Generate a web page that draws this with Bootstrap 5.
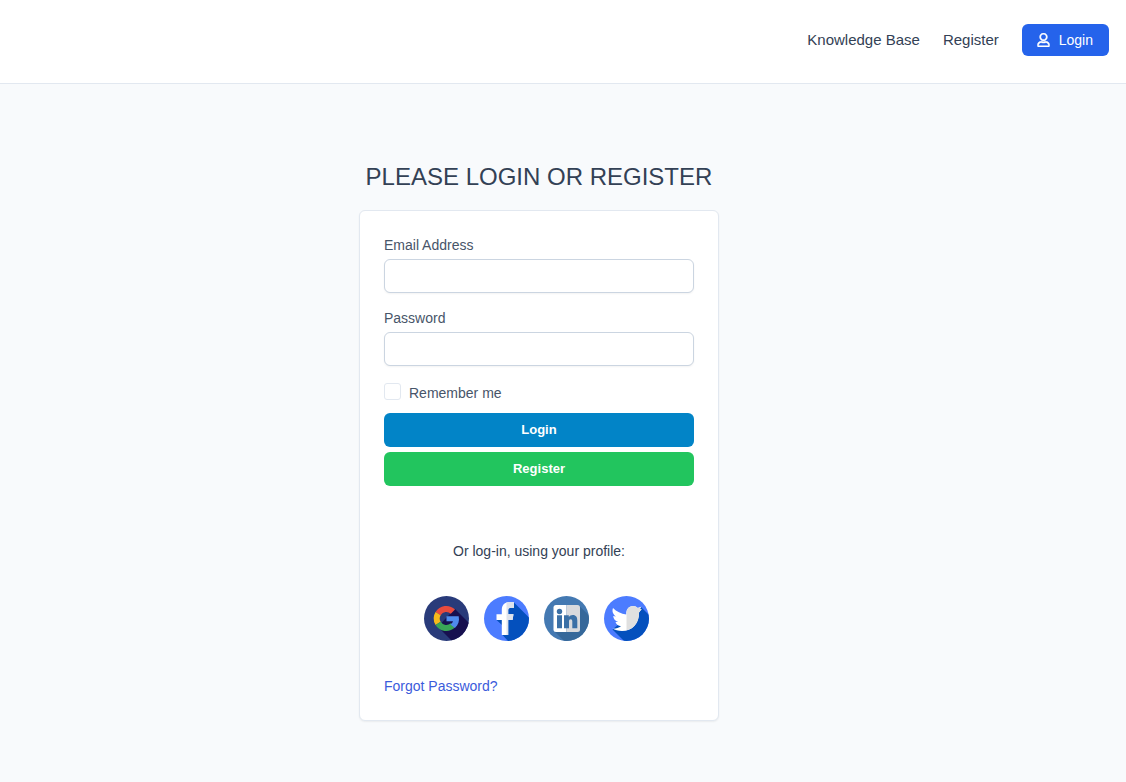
<!DOCTYPE html>
<html lang="en">
<head>
<meta charset="utf-8">
<meta name="viewport" content="width=device-width, initial-scale=1">
<title>Login</title>
<link href="https://cdn.jsdelivr.net/npm/bootstrap@5.3.0/dist/css/bootstrap.min.css" rel="stylesheet">
<style>
body { background: #f8fafc; color: #334155; font-family: "Liberation Sans", Arial, sans-serif; font-size: 14px; line-height: 20px; }
.site-header { background: #fff; border-bottom: 1px solid #e2e8f0; padding: 24px 17px 27px; }
.site-nav { gap: 23px; }
.site-nav a:not(.btn) { color: #334155; font-size: 15px; }
.btn { border: 0; border-radius: 6px; color: #fff; line-height: 20px; }
.btn-nav { background: #2563eb; font-size: 14px; padding: 6px 16px 6px 15px; gap: 9px; }
.btn-nav:hover { background: #1d4ed8; color: #fff; }
.btn-form { font-size: 13px; font-weight: 700; padding: 7px 16px; }
.btn-login, .btn-login:hover { background: #0284c7; color: #fff; }
.btn-register, .btn-register:hover { background: #22c55e; color: #fff; }
.login-main { padding: 75px 48px 60px 0; }
.login-panel { width: 100%; max-width: 360px; }
.login-title { font-size: 24px; line-height: 36px; font-weight: 400; margin-bottom: 15px; white-space: nowrap; }
.login-card { border: 1px solid #e2e8f0; border-radius: 6px; padding: 24px; box-shadow: 0 1px 2px rgba(0,0,0,.06); }
.login-field { margin-bottom: 15px; }
.form-label { color: #475569; margin-bottom: 4px; }
.form-control { height: 34px; border: 1px solid #cbd5e1; border-radius: 6px; font-size: 14px; padding: 6px 12px; box-shadow: 0 1px 2px rgba(0,0,0,.05); }
.remember-row { padding: 2px 0 10px; }
.form-check-input[type=checkbox] { width: 17px; height: 17px; border: 1px solid #e2e8f0; border-radius: 3px; margin: 0; }
.form-check-label { color: #475569; }
.form-actions { gap: 5px; }
.social-intro { margin: 55px 0 0; }
.social-row { gap: 15px; margin: 35px 0; padding-right: 5px; }
.forgot-link { color: #3b5bdb; }
</style>
</head>
<body>
<header class="site-header">
  <nav class="site-nav d-flex justify-content-end align-items-center" aria-label="Main">
    <a class="text-decoration-none" href="#kb">Knowledge Base</a>
    <a class="text-decoration-none" href="#register">Register</a>
    <a class="btn btn-nav d-flex align-items-center" href="#login">
      <svg width="13" height="14" viewBox="0 0 448 512" fill="currentColor" stroke="currentColor" stroke-width="16" aria-hidden="true"><path d="M313.6 304c-28.7 0-42.5 16-89.6 16-47.1 0-60.8-16-89.6-16C60.2 304 0 364.2 0 438.4V464c0 26.5 21.5 48 48 48h352c26.5 0 48-21.5 48-48v-25.6c0-74.2-60.2-134.4-134.4-134.4zM400 464H48v-25.6c0-47.6 38.8-86.4 86.4-86.4 14.6 0 38.3 16 89.6 16 51.7 0 74.9-16 89.6-16 47.6 0 86.4 38.8 86.4 86.4V464zM224 288c79.5 0 144-64.5 144-144S303.5 0 224 0 80 64.5 80 144s64.5 144 144 144zm0-240c52.9 0 96 43.1 96 96s-43.1 96-96 96-96-43.1-96-96 43.1-96 96-96z"/></svg>
      <span>Login</span>
    </a>
  </nav>
</header>
<main class="login-main d-flex justify-content-center">
  <div class="login-panel" id="login">
    <h1 class="login-title text-center">PLEASE LOGIN OR REGISTER</h1>
    <div class="login-card bg-white">
      <form>
        <div class="login-field">
          <label class="form-label d-block" for="email">Email Address</label>
          <input class="form-control" type="email" id="email">
        </div>
        <div class="login-field">
          <label class="form-label d-block" for="password">Password</label>
          <input class="form-control" type="password" id="password">
        </div>
        <div class="remember-row d-flex gap-2">
          <input class="form-check-input" type="checkbox" id="remember">
          <label class="form-check-label" for="remember">Remember me</label>
        </div>
        <div class="form-actions d-grid">
          <button class="btn btn-form btn-login" type="submit">Login</button>
          <button class="btn btn-form btn-register" type="button">Register</button>
        </div>
      </form>
      <p class="social-intro text-center">Or log-in, using your profile:</p>
      <div class="social-row d-flex justify-content-center">
        <a href="#google" class="d-flex" aria-label="Google">
          <svg width="45" height="45" viewBox="0 0 45 45" aria-hidden="true">
            <clipPath id="disc"><circle cx="22.5" cy="22.5" r="22.5"/></clipPath>
            <g clip-path="url(#disc)">
              <path fill="#293b7a" d="M0 0h45v45H0z"/>
              <path fill="#17104f" d="M31 13l14 14v18H28L14 31l8-9z"/>
            </g>
            <g fill="none" stroke-width="6">
              <path stroke="#e94b3d" d="M14.100 17.600a9.500 9.500 0 0 1 14.800-1.900"/>
              <path stroke="#f7b91b" d="M14.100 27.400a9.500 9.500 0 0 1 0-9.800"/>
              <path stroke="#39a557" d="M28.800 29.400a9.500 9.500 0 0 1-14.700-2"/>
            </g>
            <path fill="#4f8cee" d="M22.500 20.200h12.200c1 4.700-.4 8.600-3.800 11.800l-4.500-3.600c1.300-.8 2.200-1.800 2.600-3.100h-6.500z"/>
          </svg>
        </a>
        <a href="#facebook" class="d-flex" aria-label="Facebook">
          <svg width="45" height="45" viewBox="0 0 45 45" aria-hidden="true">
            <g clip-path="url(#disc)">
              <path fill="#4c7cff" d="M0 0h45v45H0z"/>
              <path fill="#0450bd" d="M30 6.500l15 15V45H24l-6-6.500V29l-5.500-5z"/>
            </g>
            <path fill="#fff" d="M30 6.300v5.400h-3.200c-1.800 0-2.600.9-2.600 2.500v4h5.300l-1 5.800h-4.300v15h-6.400V24H12.500v-5.800h5.300v-4.400c0-5 2.900-7.800 8-7.800 1.800 0 3.300.1 4.200.3z"/>
            <path fill="#dfe3ec" d="M22.500 6.600c1-.4 2.100-.6 3.300-.6 1.800 0 3.300.1 4.200.3v5.400h-3.200c-1.800 0-2.600.9-2.600 2.500v4h5.300l-1 5.800h-4.300v15h-1.700z"/>
          </svg>
        </a>
        <a href="#linkedin" class="d-flex" aria-label="LinkedIn">
          <svg width="45" height="45" viewBox="0 0 45 45" aria-hidden="true">
            <g clip-path="url(#disc)">
              <path fill="#4479b2" d="M0 0h45v45H0z"/>
              <path fill="#36689a" d="M35.500 10L45 19.500V45H20L10.500 35.500z"/>
            </g>
            <path fill="#fff" d="M12 9h10.500v27H12a2.500 2.500 0 0 1-2.500-2.500v-22A2.500 2.500 0 0 1 12 9z"/>
            <path fill="#d9dadd" d="M22.500 9h11a2.500 2.500 0 0 1 2.500 2.500v22a2.500 2.500 0 0 1-2.500 2.500h-11z"/>
            <g fill="#3b70a6"><circle cx="15.500" cy="15.500" r="2.700"/><path d="M13 19.300h5v13h-5zM20 19.300h4.800v1.700c.9-1.300 2.200-2 4-2 3.300 0 4.500 2.200 4.500 5.600v7.700h-5v-6.800c0-1.600-.5-2.300-1.600-2.300s-1.700.8-1.700 2.300v6.800h-5z"/></g>
          </svg>
        </a>
        <a href="#twitter" class="d-flex" aria-label="Twitter">
          <svg width="45" height="45" viewBox="0 0 45 45" aria-hidden="true">
            <clipPath id="birdRight"><path d="M22.500 0H45v45H22.500z"/></clipPath>
            <g clip-path="url(#disc)">
              <path fill="#4c7cff" d="M0 0h45v45H0z"/>
              <path fill="#0450bd" d="M37 11l8 8v26H20L8.500 33.500 22 22z"/>
            </g>
            <path id="bird" fill="#fff" d="M9 12c3.500 3.500 8 5.700 13.300 6.500C21.800 13.500 25 10 29 10c2 0 3.600.7 4.800 2l3.500-1.300-1.500 2.600 1.900-.3-2.700 3.500C35.300 27 28.500 35 18 35c-3.800 0-7-.8-9.500-2.400 3.300.2 6.200-.7 8.500-2.400-2.700-.3-4.600-1.800-5.500-4.200h2.600c-2.900-1-4.700-3.200-4.900-6l2.700.6C9.200 18.400 7.700 15.500 9 12z"/>
            <use href="#bird" clip-path="url(#birdRight)" style="filter: brightness(.88)"/>
          </svg>
        </a>
      </div>
      <a class="forgot-link text-decoration-none" href="#forgot">Forgot Password?</a>
    </div>
  </div>
</main>
<script src="https://cdn.jsdelivr.net/npm/bootstrap@5.3.0/dist/js/bootstrap.bundle.min.js"></script>
</body>
</html>
